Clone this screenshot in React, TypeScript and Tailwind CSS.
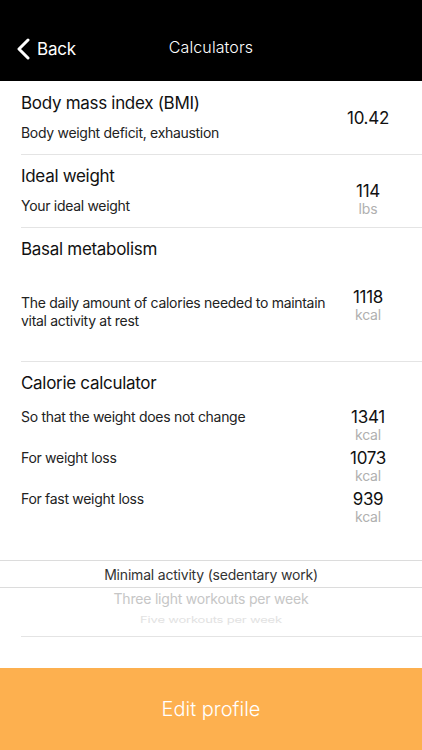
import React from 'react';

const font = { fontFamily: 'Inter, "Noto Sans", sans-serif' };

function Value({ num, unit }: { num: string; unit?: string }) {
  return (
    <div className="w-[64px] flex flex-col items-center leading-none">
      <span className="text-[17px] text-[#111] tracking-[-0.3px]">{num}</span>
      {unit && <span className="text-[14px] text-[#b0b0b0] mt-[2px] tracking-[-0.2px]">{unit}</span>}
    </div>
  );
}

export default function App() {
  return (
    <div className="w-[422px] h-[750px] bg-white flex flex-col overflow-hidden" style={font}>
      <div className="h-[81px] bg-black flex items-end pb-[19px] relative shrink-0">
        <div className="flex items-center pl-[16px] text-white">
          <svg width="16" height="22" viewBox="0 0 16 22" fill="none">
            <path d="M12 2 L3 11 L12 20" stroke="white" strokeWidth="3" strokeLinecap="round" strokeLinejoin="round" />
          </svg>
          <span className="ml-[5px] text-[17px] tracking-[-0.2px]">Back</span>
        </div>
        <div className="absolute left-0 right-0 bottom-[22px] text-center text-white text-[16px] font-light tracking-[0.1px]">
          Calculators
        </div>
      </div>

      <div className="pl-[21px] flex flex-col tracking-[-0.3px]">
        <div className="h-[74px] border-b border-[#e4e4e4] flex items-start pr-[22px]">
          <div className="flex-1 flex flex-col pt-[14px]">
            <span className="text-[17px] text-[#111] leading-none">Body mass index (BMI)</span>
            <span className="text-[14px] text-[#222] mt-[14px] leading-none">Body weight deficit, exhaustion</span>
          </div>
          <div className="pt-[29px]"><Value num="10.42" /></div>
        </div>

        <div className="h-[73px] border-b border-[#e4e4e4] flex items-start pr-[22px]">
          <div className="flex-1 flex flex-col pt-[13px]">
            <span className="text-[17px] text-[#111] leading-none">Ideal weight</span>
            <span className="text-[14px] text-[#222] mt-[14px] leading-none">Your ideal weight</span>
          </div>
          <div className="pt-[28px]"><Value num="114" unit="lbs" /></div>
        </div>

        <div className="h-[134px] border-b border-[#e4e4e4] flex flex-col pr-[22px] pt-[13px]">
          <span className="text-[17px] text-[#111] leading-none">Basal metabolism</span>
          <div className="flex items-start mt-[31px]">
            <span className="flex-1 text-[14px] text-[#222] leading-[18px] pt-[5px] pr-[4px]">
              The daily amount of calories needed to maintain vital activity at rest
            </span>
            <Value num="1118" unit="kcal" />
          </div>
        </div>

        <div className="flex flex-col pr-[22px] pt-[13px]">
          <span className="text-[17px] text-[#111] leading-none">Calorie calculator</span>
          <div className="flex flex-col mt-[17px] gap-[8px]">
            {[
              ['So that the weight does not change', '1341'],
              ['For weight loss', '1073'],
              ['For fast weight loss', '939']
            ].map(([label, v]) => (
              <div key={label} className="flex items-start">
                <span className="flex-1 text-[14px] text-[#222] leading-none pt-[1px]">{label}</span>
                <Value num={v} unit="kcal" />
              </div>
            ))}
          </div>
        </div>
      </div>

      <div className="mt-[36px] flex flex-col tracking-[-0.2px]">
        <div className="h-[28px] border-y border-[#dcdcdc] flex items-center justify-center text-[14px] text-[#333]">
          Minimal activity (sedentary work)
        </div>
        <div className="h-[49px] ml-[21px] pr-[21px] border-b border-[#e4e4e4] flex flex-col items-center overflow-hidden">
          <span className="text-[14px] text-[#c6c6c6] mt-[4px] leading-none">Three light workouts per week</span>
          <span className="text-[13px] text-[#e2e2e2] mt-[7px] leading-none scale-y-[0.7]">Five workouts per week</span>
        </div>
      </div>

      <div className="mt-auto h-[82px] bg-[#fdb04f] flex items-center justify-center text-white text-[20px] font-light">
        Edit profile
      </div>
    </div>
  );
}
